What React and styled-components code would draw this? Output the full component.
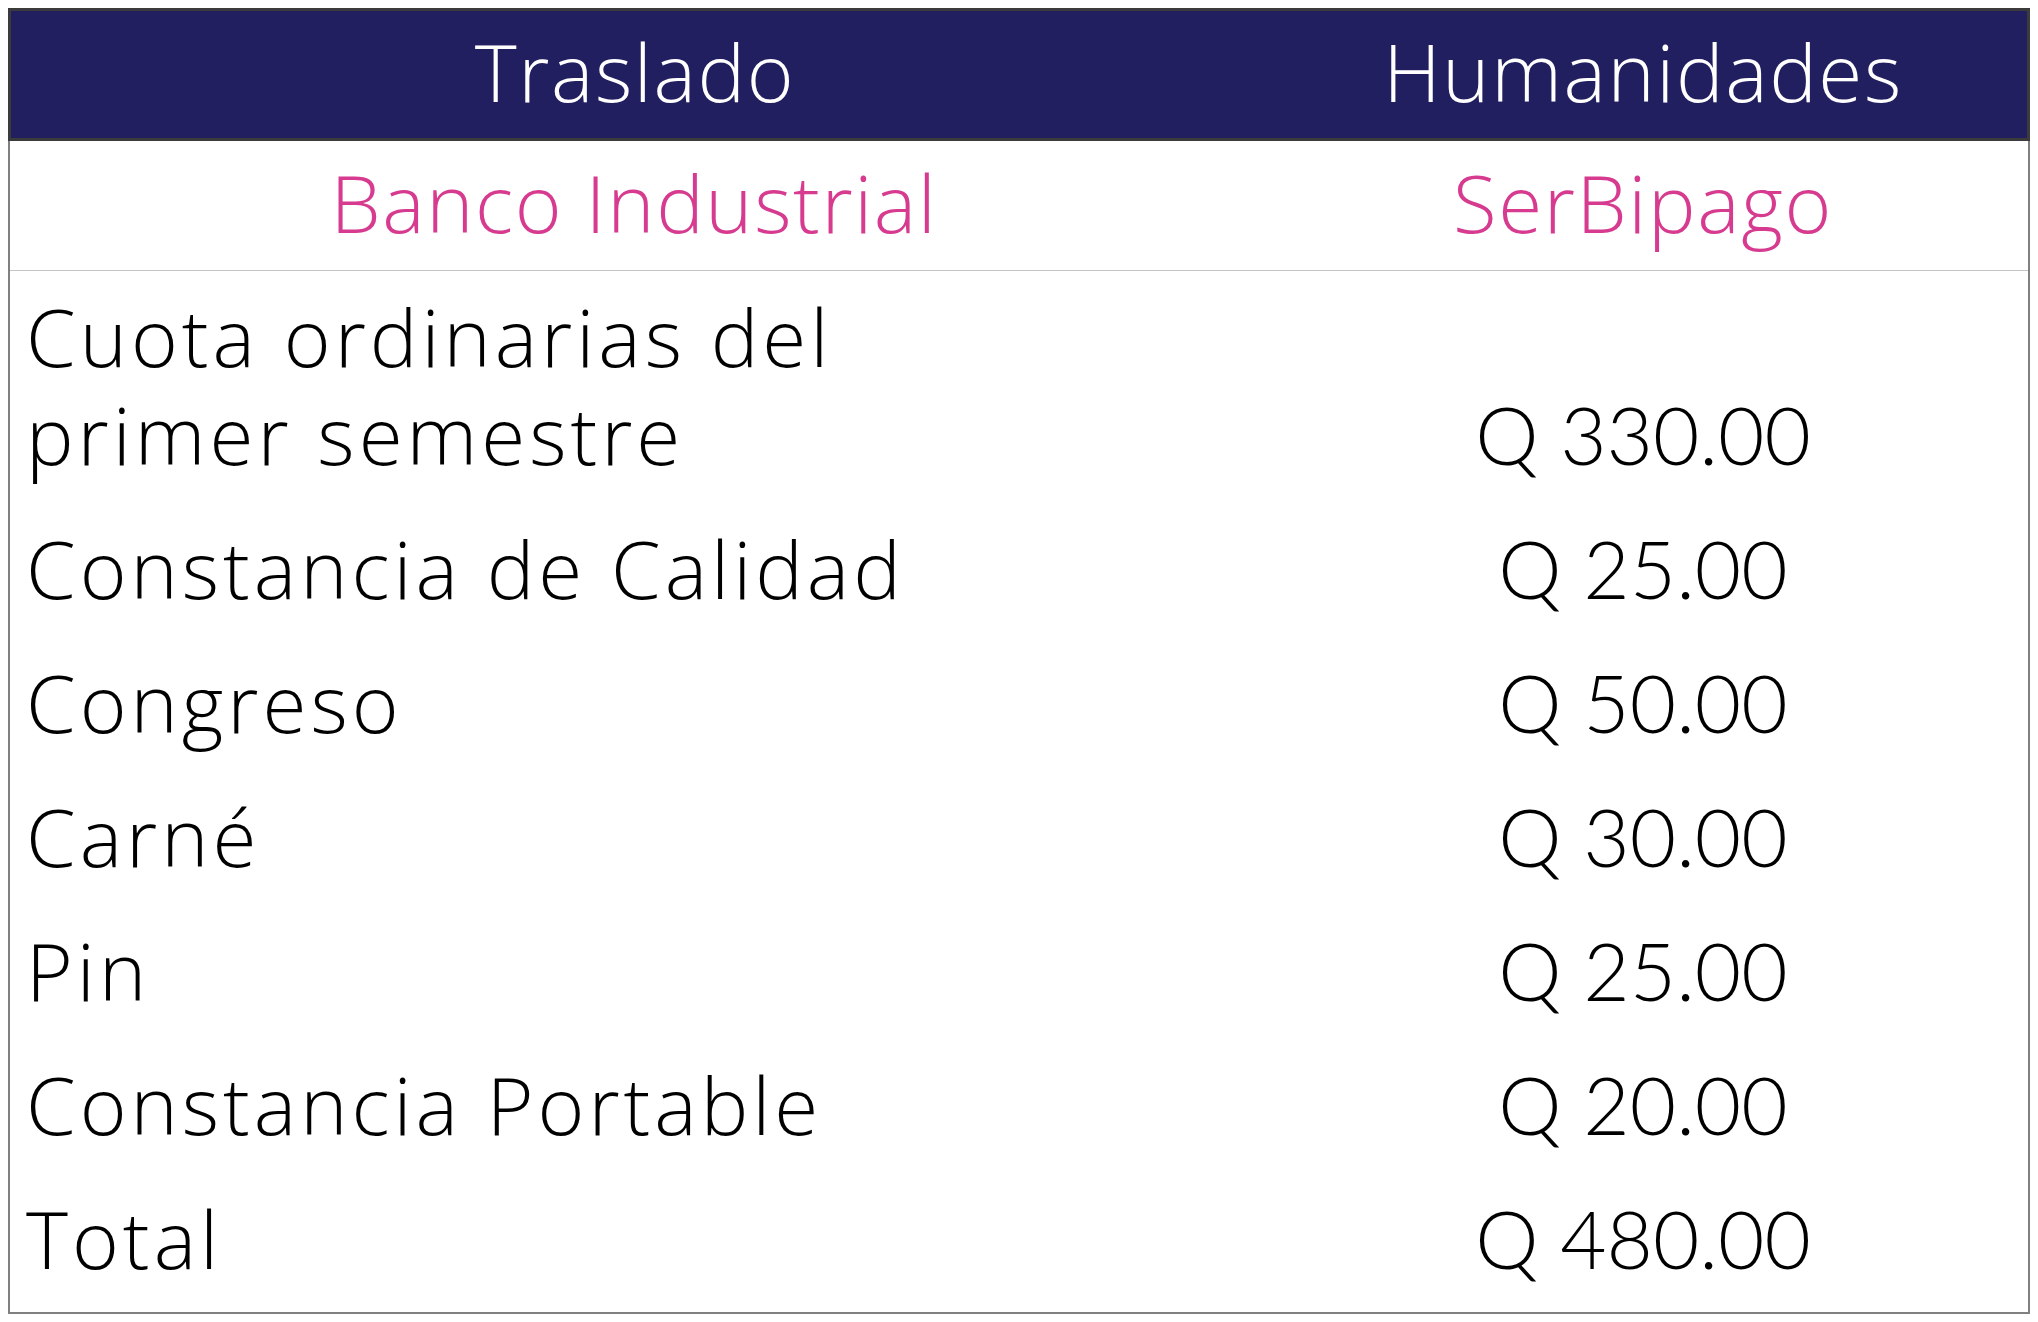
import React from "react";
import styled, { createGlobalStyle } from "styled-components";

const GlobalStyle = createGlobalStyle`
  body {
    margin: 8px;
    background: #ffffff;
    font-family: "Open Sans", "Noto Sans", sans-serif;
  }
`;

const Table = styled.div`
  width: 2022px;
  height: 1306px;
  box-sizing: border-box;
  border: 2px solid #808080;
  display: flex;
  flex-direction: column;
`;

const Row = styled.div`
  display: grid;
  grid-template-columns: 1248px 1fr;
  align-items: end;
  box-sizing: border-box;
  padding: 16px 0 20px 0;
  color: #000;
  font-size: 80px;
  font-weight: 360;
  letter-spacing: 0.05em;
  line-height: 98px;
`;

const HeadRow = styled(Row)`
  background: #221f60;
  border: 3px solid #3b3b3b;
  margin: -2px -2px 0 -2px;
  height: 133px;
  padding: 0 0 8px 0;
  align-items: center;
  letter-spacing: 0.02em;
  color: #fff;
`;

const BankRow = styled(Row)`
  height: 130px;
  padding: 0 0 8px 0;
  align-items: center;
  letter-spacing: 0.02em;
  color: #d63b8f;
  border-bottom: 1px solid #c4c4c4;
`;

const Center = styled.div`
  text-align: center;
`;

const Label = styled.div`
  padding-left: 16px;
`;

const Amount = styled.div`
  text-align: center;
  font-family: "Lato", "Noto Sans", sans-serif;
  font-weight: 300;
  letter-spacing: 0;
  font-size: 80px;
`;

const items = [
  ["Cuota ordinarias del\nprimer semestre", "Q 330.00"],
  ["Constancia de Calidad", "Q 25.00"],
  ["Congreso", "Q 50.00"],
  ["Carné", "Q 30.00"],
  ["Pin", "Q 25.00"],
  ["Constancia Portable", "Q 20.00"],
  ["Total", "Q 480.00"],
];

export default function App() {
  return (
    <>
      <GlobalStyle />
      <Table>
        <HeadRow>
          <Center>Traslado</Center>
          <Center>Humanidades</Center>
        </HeadRow>
        <BankRow>
          <Center>Banco Industrial</Center>
          <Center>SerBipago</Center>
        </BankRow>
        {items.map(([label, amount]) => (
          <Row key={label}>
            <Label>
              {label.split("\n").map((line) => (
                <div key={line}>{line}</div>
              ))}
            </Label>
            <Amount>{amount}</Amount>
          </Row>
        ))}
      </Table>
    </>
  );
}
